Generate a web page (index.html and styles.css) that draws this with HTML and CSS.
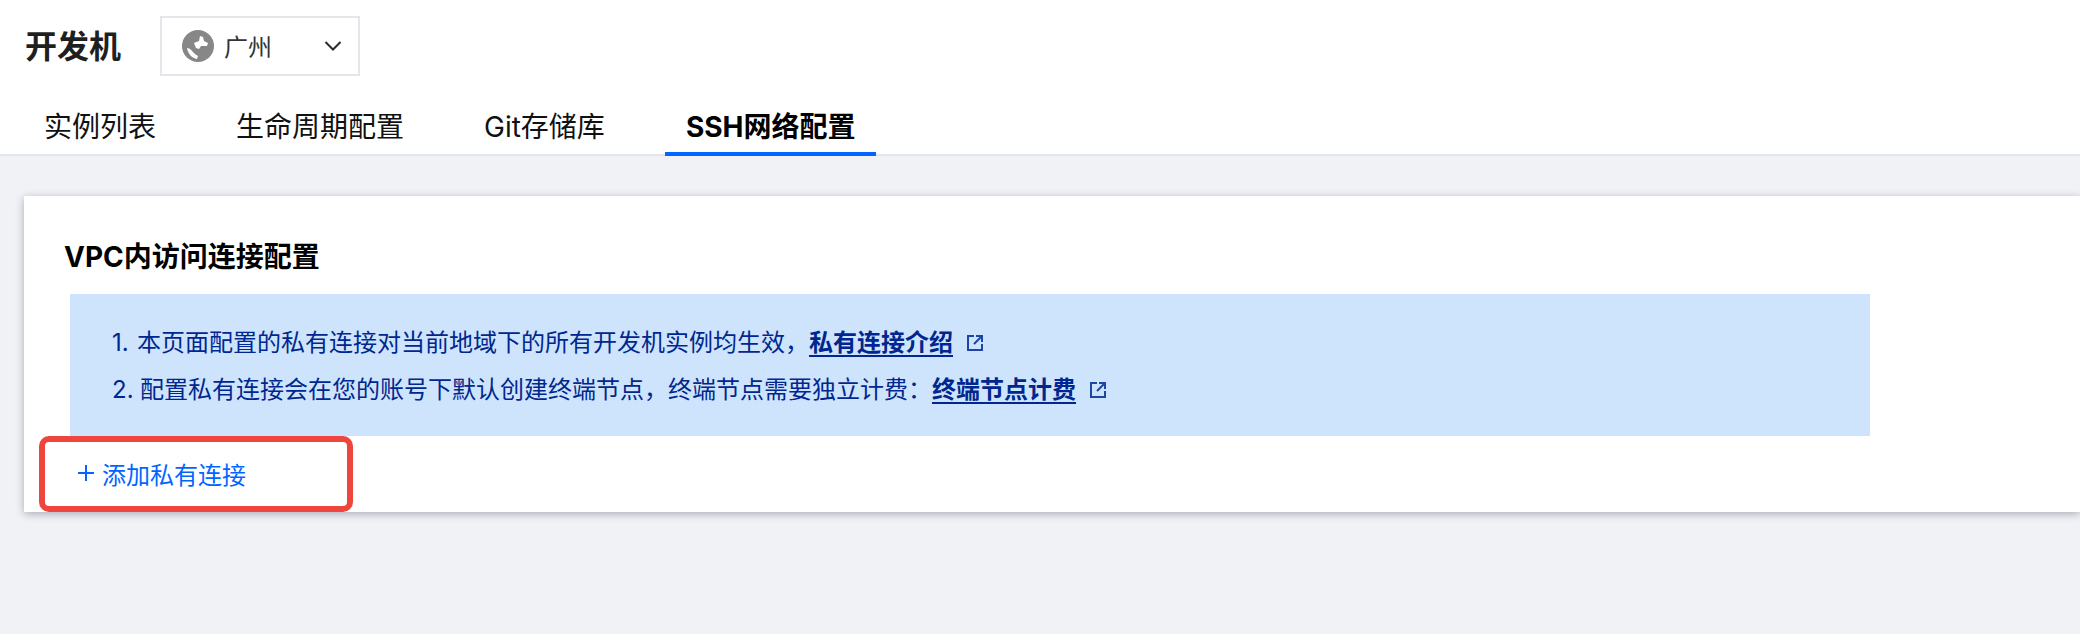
FILE: index.html
```html
<!DOCTYPE html>
<html lang="zh-CN">
<head>
  <meta charset="UTF-8">
  <meta name="viewport" content="width=device-width, initial-scale=1.0">
  <title>开发机</title>
  <link rel="stylesheet" href="styles.css">
</head>
<body>
  <div class="header">
    <div class="title-row">
      <h2 class="page-title">开发机</h2>
      <div class="region-select">
        <svg class="globe" width="32" height="32" viewBox="0 0 32 32">
          <circle cx="16" cy="16" r="16" fill="#878787"/>
          <path d="M5 18c3 0 5 3 7 5s3 2 4 3l-1 3c-5-1-9-5-10-11z" fill="#fff"/>
          <path d="M12 13l5-2 1-5 3 1 1 4 4 2-1 3h-6l-2 3-3-1z" fill="#fff"/>
        </svg>
        <span class="region-name">广州</span>
        <svg class="chevron" width="18" height="12" viewBox="0 0 18 12">
          <path d="M1.5 2l7.5 7.5L16.5 2" fill="none" stroke="#2b2b2b" stroke-width="2"/>
        </svg>
      </div>
    </div>
    <div class="tabs">
      <div class="tab">实例列表</div>
      <div class="tab">生命周期配置</div>
      <div class="tab">Git存储库</div>
      <div class="tab active">SSH网络配置</div>
    </div>
  </div>

  <div class="card">
    <h3 class="card-title">VPC内访问连接配置</h3>
    <div class="alert">
      <ol>
        <li><span class="num">1.</span>本页面配置的私有连接对当前地域下的所有开发机实例均生效，<a href="#">私有连接介绍</a><svg class="ext" width="18" height="18" viewBox="0 0 18 18"><path d="M8 2H2v14h14v-6M10 2h6v6M16 2L8 10" fill="none" stroke="#1c46a6" stroke-width="2"/></svg></li>
        <li><span class="num">2.</span>配置私有连接会在您的账号下默认创建终端节点，终端节点需要独立计费：<a href="#">终端节点计费</a><svg class="ext" width="18" height="18" viewBox="0 0 18 18"><path d="M8 2H2v14h14v-6M10 2h6v6M16 2L8 10" fill="none" stroke="#1c46a6" stroke-width="2"/></svg></li>
      </ol>
    </div>
    <div class="add-row">
      <svg class="plus" width="16" height="16" viewBox="0 0 16 16"><path d="M8 0v16M0 8h16" stroke="#0066ff" stroke-width="2"/></svg>
      <span>添加私有连接</span>
    </div>
    <div class="highlight"></div>
  </div>
</body>
</html>
```

FILE: styles.css
```css
* { box-sizing: border-box; }
body {
  margin: 0;
  font-family: Inter, 'Noto Sans CJK SC', sans-serif;
  background: #f0f2f6;
  color: #000;
  height: 634px;
  overflow: hidden;
}
.header {
  background: #fff;
  height: 156px;
  border-bottom: 2px solid #e3e6eb;
  padding: 16px 0 0 25px;
}
.title-row {
  display: flex;
  align-items: center;
  height: 60px;
}
.page-title {
  margin: 0 0 4px;
  width: 135px;
  font-size: 32px;
  font-weight: 700;
  color: #1f1f1f;
}
.region-select {
  width: 200px;
  height: 60px;
  border: 2px solid #e3e6eb;
  display: flex;
  align-items: center;
  padding: 0 16px 0 20px;
}
.globe { flex: none; }
.region-name {
  margin: 0 0 2px 10px;
  flex: 1;
  font-size: 24px;
  color: #333;
}
.tabs {
  display: flex;
  gap: 40px;
  margin: 16px 0 0 -1px;
}
.tab {
  height: 64px;
  line-height: 70px;
  padding: 0 20px;
  font-size: 28px;
  color: #111;
  white-space: nowrap;
}
.tab.active {
  padding: 0 21px;
  font-weight: 700;
  color: #000;
  border-bottom: 4px solid #0066ff;
}
.card {
  position: relative;
  margin: 40px 0 0 24px;
  height: 316px;
  background: #fff;
  box-shadow: 0 2px 8px rgba(40, 46, 60, 0.35);
  padding: 28px 0 0 40px;
}
.card-title {
  margin: 0;
  height: 70px;
  font-size: 28px;
  line-height: 66px;
  font-weight: 700;
}
.alert {
  margin-left: 6px;
  width: 1800px;
  height: 142px;
  background: #cee4fd;
  padding: 25px 0 0 42px;
  color: #00278f;
  font-size: 24px;
}
.alert ol {
  margin: 0;
  padding: 0;
  list-style: none;
}
.alert li {
  height: 47px;
  line-height: 47px;
}
.num {
  display: inline-block;
  width: 25px;
}
.alert li + li .num {
  width: 28px;
}
.alert a {
  color: #00278f;
  font-weight: 600;
  text-decoration: underline;
  text-decoration-thickness: 2px;
  text-underline-offset: 4px;
}
.ext {
  margin-left: 13px;
  vertical-align: -1px;
}
.add-row {
  display: flex;
  align-items: center;
  gap: 8px;
  height: 74px;
  padding-left: 14px;
  color: #0066ff;
  font-size: 24px;
}
.plus { flex: none; }
.highlight {
  position: absolute;
  left: 15px;
  top: 240px;
  width: 314px;
  height: 76px;
  border: 6px solid #ee453d;
  border-radius: 10px;
}
```
